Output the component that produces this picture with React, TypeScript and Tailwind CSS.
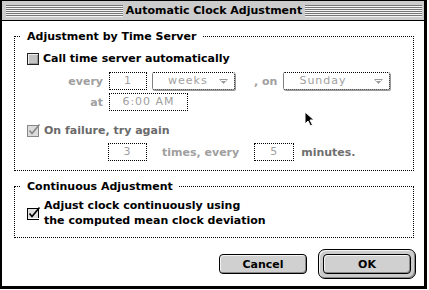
const sys = "font-['DejaVu_Sans',sans-serif] text-[11px] leading-[13px] font-bold";
const dim = "font-['DejaVu_Sans',sans-serif] text-[11px] tracking-[1px] text-[#a0a0a0]";

function Stripes() {
    return (
        <div className="flex flex-1 flex-col">
            {[0, 1, 2, 3, 4, 5].map((i) => (
                <div key={i} className="h-[2px] border-t border-[#777] bg-[#f4f4f4]"/>
            ))}
        </div>
    );
}

function Field({value, className}: { value: string, className: string }) {
    return (
        <div className={"flex h-[18px] items-center justify-center border border-dotted border-black bg-white " + className}>
            <span className={dim}>{value}</span>
        </div>
    );
}

function Popup({value, className}: { value: string, className: string }) {
    return (
        <div
            className={"flex h-[18px] items-center justify-between rounded-[2px] border border-dotted border-black bg-white pr-[6px] pl-[15px] shadow-[1px_1px_0_#999] " + className}>
            <span className={dim}>{value}</span>
            <svg width="9" height="5" viewBox="0 0 9 5">
                <polygon points="0,0 9,0 4.5,5" fill="#9a9a9a"/>
                <line x1="2" y1="1.5" x2="7" y2="1.5" stroke="#fff" strokeWidth="1"/>
            </svg>
        </div>
    );
}

function CheckMark({disabled}: { disabled?: boolean }) {
    const c = disabled ? '#888' : '#000';
    return (
        <svg width="14" height="14" viewBox="0 0 14 14" className="shrink-0">
            <rect x="0.5" y="2.5" width="11" height="11" fill={disabled ? '#dcdcdc' : '#e0e0e0'} stroke={c}/>
            {!disabled && <path d="M1.5 12.5 H12.5 V3.5" stroke="#fff" fill="none"/>}
            <path d="M2.5 7.5 L5 10.5 L12.5 1.5" stroke={c} strokeWidth="1.6" fill="none"/>
        </svg>
    );
}

function GroupBox({title, className, children}: { title: string, className: string, children: React.ReactNode }) {
    return (
        <div className={"border border-dotted border-black " + className}>
            <div className={"-mt-[7px] ml-[6px] w-fit bg-white px-[6px] text-black " + sys}>{title}</div>
            {children}
        </div>
    );
}

export default function App() {
    return (
        <div className="relative h-[290px] w-[429px] bg-white">
            <div className="flex h-[289px] w-[427px] flex-col border-t border-r-[3px] border-b-[3px] border-l-2 border-black">
                {/* title bar */}
                <div className="flex h-[20px] items-center gap-[3px] border-b border-black bg-[#cccccc] pr-[2px] pl-[4px]">
                    <Stripes/>
                    <span className={sys + " text-black"}>Automatic Clock Adjustment</span>
                    <Stripes/>
                </div>

                <div className="flex flex-col pl-[12px]">
                    <GroupBox title="Adjustment by Time Server" className="mt-[15px] h-[135px] w-[400px]">
                        <div className="mt-[9px] flex items-center gap-[4px] pl-[12px]">
                            <div
                                className="h-[12px] w-[12px] border border-[#222] bg-[#c4c4c4] shadow-[inset_1px_1px_0_#eee,inset_-1px_-1px_0_#999]"/>
                            <span className={sys + " text-black"}>Call time server automatically</span>
                        </div>

                        <div className="mt-[7px] flex items-center">
                            <span className={"w-[88px] text-right text-[#a0a0a0] " + sys}>every</span>
                            <Field value="1" className="ml-[6px] w-[38px]"/>
                            <Popup value="weeks" className="ml-[5px] w-[83px]"/>
                            <span className={"ml-[19px] text-[#a0a0a0] " + sys}>, on</span>
                            <Popup value="Sunday" className="ml-[6px] w-[107px]"/>
                        </div>

                        <div className="mt-[3px] flex items-center">
                            <span className={"w-[88px] text-right text-[#a0a0a0] " + sys}>at</span>
                            <Field value="6:00 AM" className="ml-[6px] w-[79px]"/>
                        </div>

                        <div className="mt-[13px] flex items-center gap-[3px] pl-[12px]">
                            <div className="-mt-[2px]"><CheckMark disabled/></div>
                            <span className={sys + " text-[#6a6a6a]"}>On failure, try again</span>
                        </div>

                        <div className="mt-[6px] flex items-center pl-[93px]">
                            <Field value="3" className="w-[39px]"/>
                            <span className={"ml-[15px] text-[#a0a0a0] " + sys}>times, every</span>
                            <Field value="5" className="ml-[15px] w-[40px]"/>
                            <span className={"ml-[7px] text-[#707070] " + sys}>minutes.</span>
                        </div>
                    </GroupBox>

                    <GroupBox title="Continuous Adjustment" className="mt-[15px] h-[52px] w-[400px]">
                        <div className="mt-[5px] flex items-start gap-[3px] pl-[12px]">
                            <div className="mt-[8px]"><CheckMark/></div>
                            <span className={sys + " leading-[15px] text-black"}>
                                Adjust clock continuously using<br/>the computed mean clock deviation
                            </span>
                        </div>
                    </GroupBox>
                </div>

                <div className="mt-[11px] flex items-center justify-end gap-[11px] pr-[8px]">
                    <button
                        className={"h-[20px] w-[88px] rounded-[4px] border border-black bg-[#d0d0d0] text-black shadow-[inset_1px_1px_0_#f4f4f4,inset_-1px_-1px_0_#888] " + sys}>
                        Cancel
                    </button>
                    <div
                        className="rounded-[7px] border border-black bg-[#cccccc] p-[4px] shadow-[inset_1px_1px_0_#f4f4f4,inset_-1px_-1px_0_#888]">
                        <button
                            className={"block h-[20px] w-[88px] rounded-[4px] border border-black bg-[#d0d0d0] text-black shadow-[inset_1px_1px_0_#f4f4f4,inset_-1px_-1px_0_#888] " + sys}>
                            OK
                        </button>
                    </div>
                </div>
            </div>

            {/* mouse pointer */}
            <svg width="12" height="17" viewBox="0 0 12 17" className="absolute top-[111px] left-[304px]">
                <path d="M1 1 L1 13 L4 10 L6.5 15 L8.5 14 L6 9 L10 9 Z" fill="#000" stroke="#fff" strokeWidth="1"/>
            </svg>
        </div>
    );
}
